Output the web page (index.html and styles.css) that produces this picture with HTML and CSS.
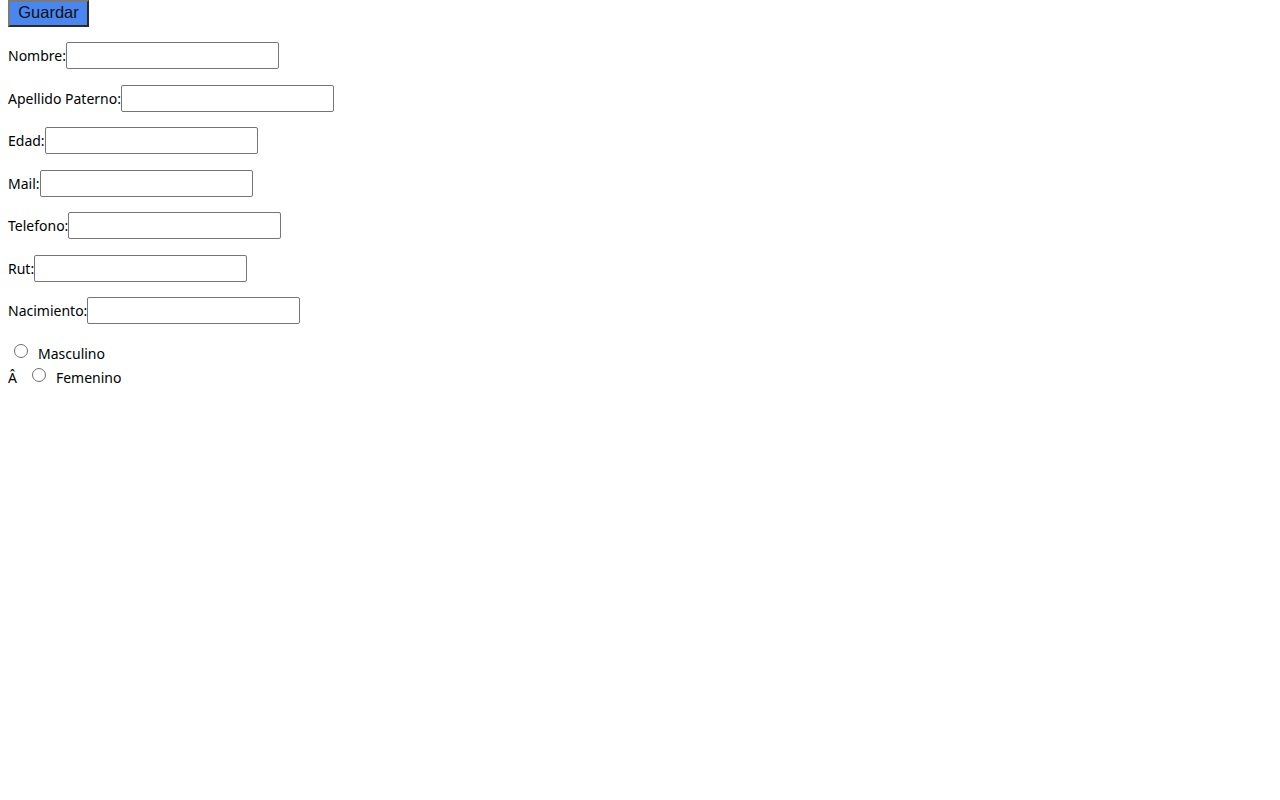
FILE: index.html
```html
<!DOCTYPE html>
<html lang="es">
<head>
<meta charset="utf-8">
<title>Formulario</title>
<link rel="stylesheet" href="styles.css">
</head>
<body>
<div class="page">
  <button class="save" type="button">Guardar</button>
  <form class="form">
    <div class="row"><label class="lbl">Nombre:</label><input class="field" type="text"></div>
    <div class="row"><label class="lbl">Apellido Paterno:</label><input class="field" type="text"></div>
    <div class="row"><label class="lbl">Edad:</label><input class="field" type="text"></div>
    <div class="row"><label class="lbl">Mail:</label><input class="field" type="text"></div>
    <div class="row"><label class="lbl">Telefono:</label><input class="field" type="text"></div>
    <div class="row"><label class="lbl">Rut:</label><input class="field" type="text"></div>
    <div class="row"><label class="lbl">Nacimiento:</label><input class="field" type="text"></div>
    <div class="radios">
      <div class="radio-row"><span class="dot"></span><span class="rtext">Masculino</span></div>
      <div class="radio-row"><span class="stray">Â</span><span class="dot"></span><span class="rtext">Femenino</span></div>
    </div>
  </form>
</div>
</body>
</html>
```

FILE: styles.css
```css
html, body {
  margin: 0;
  padding: 0;
  background: #ffffff;
}
.page {
  padding: 0 8px;
  font-family: "Noto Sans", "Open Sans", sans-serif;
  font-size: 14px;
  color: #000000;
  display: flex;
  flex-direction: column;
  align-items: flex-start;
}
.save {
  width: 81px;
  height: 27px;
  margin: 0;
  padding: 0 0 2px 0;
  background: #4a86f0;
  color: #111111;
  font-family: "Liberation Sans", Arial, sans-serif;
  font-size: 16.5px;
  border-style: solid;
  border-width: 2px;
  border-color: #7a7a7a #2b2b2b #2b2b2b #7a7a7a;
  line-height: 1;
}
.form {
  margin-top: 15px;
  display: flex;
  flex-direction: column;
  gap: 15.5px;
}
.row {
  display: flex;
  align-items: center;
  height: 27px;
}
.lbl {
  white-space: nowrap;
}
.field {
  box-sizing: border-box;
  width: 213px;
  height: 27px;
  margin: 0;
  border: 1px solid #767676;
  border-radius: 2px;
  background: #ffffff;
  padding: 0 3px;
}
.radios {
  display: flex;
  flex-direction: column;
  margin-top: 2px;
}
.radio-row {
  display: flex;
  align-items: center;
  height: 24px;
}
.dot {
  box-sizing: border-box;
  width: 14px;
  height: 14px;
  border: 1.4px solid #6e6e6e;
  border-radius: 50%;
  margin: 0 10px 0 6px;
  position: relative;
  top: -3px;
  background: #ffffff;
}
.stray {
  margin-right: 9px;
}
```
